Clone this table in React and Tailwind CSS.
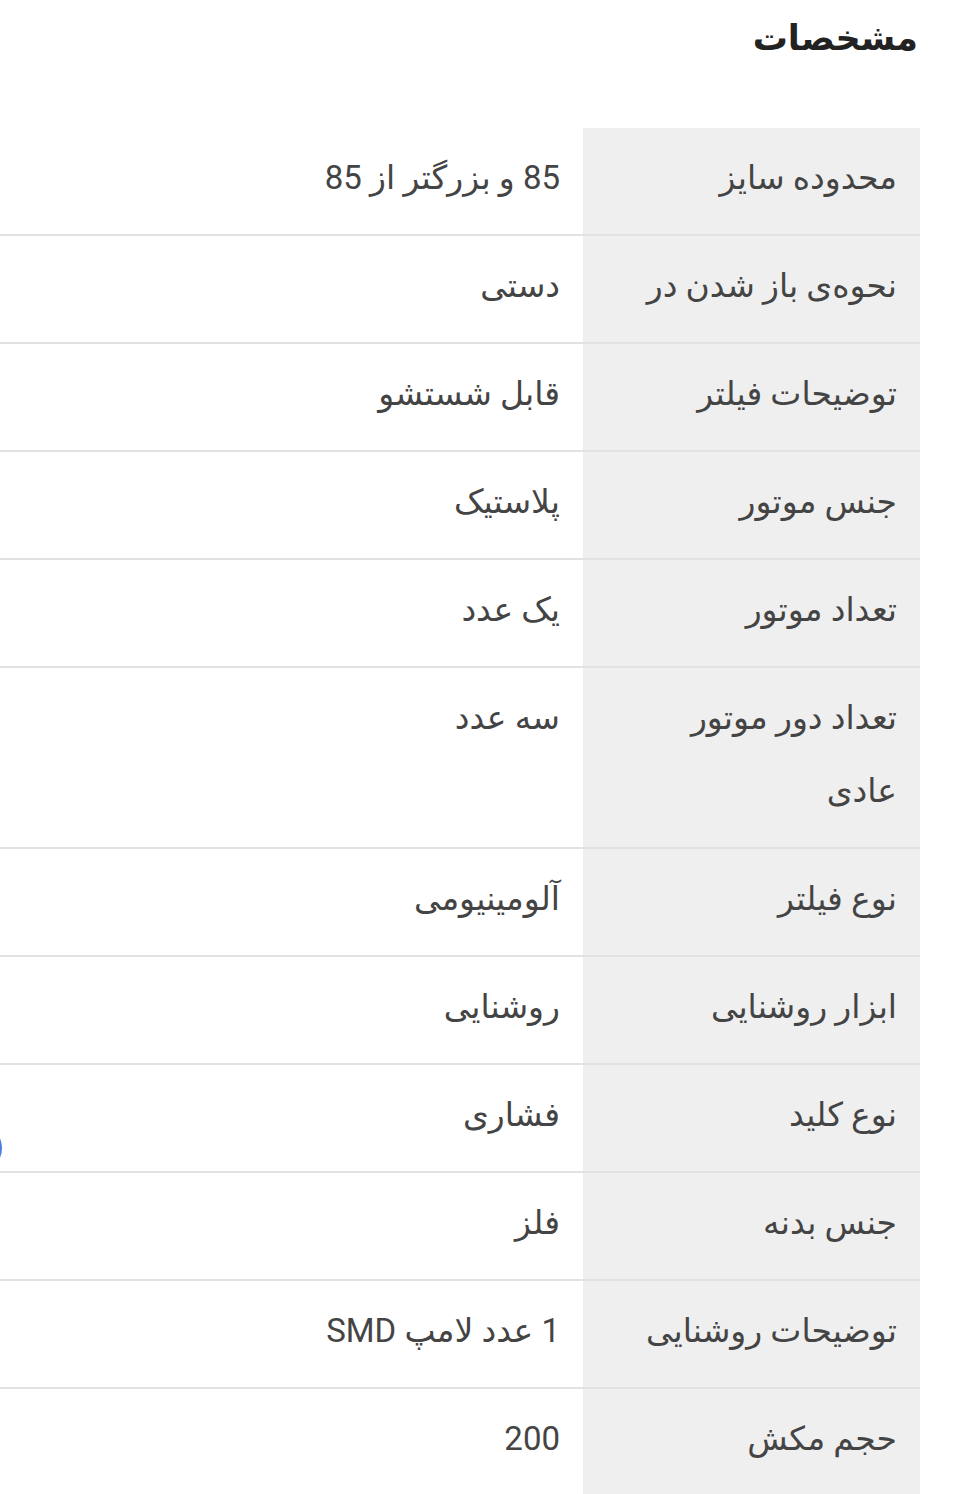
const specs = [
  { label: "محدوده سایز", value: "85 و بزرگتر از 85" },
  { label: "نحوه‌ی باز شدن در", value: "دستی" },
  { label: "توضیحات فیلتر", value: "قابل شستشو" },
  { label: "جنس موتور", value: "پلاستیک" },
  { label: "تعداد موتور", value: "یک عدد" },
  { label: "تعداد دور موتور عادی", value: "سه عدد" },
  { label: "نوع فیلتر", value: "آلومینیومی" },
  { label: "ابزار روشنایی", value: "روشنایی" },
  { label: "نوع کلید", value: "فشاری" },
  { label: "جنس بدنه", value: "فلز" },
  { label: "توضیحات روشنایی", value: "1 عدد لامپ SMD" },
  { label: "حجم مکش", value: "200" },
];

export default function App() {
  return (
    <div
      dir="rtl"
      className="relative w-[965px] h-[1494px] overflow-hidden bg-white font-['Roboto','DejaVu_Sans',sans-serif]"
    >
      {/* Title */}
      <h2 className="pr-[47px] pt-[13px] h-[128px] text-[35px] font-bold leading-[52px] text-[#222]">
        مشخصات
      </h2>

      {/* Spec table */}
      <div className="mr-[45px]">
        {specs.map((s, i) => (
          <div
            key={i}
            className={`flex ${i > 0 ? "border-t-2 border-[#e2e2e2]" : ""}`}
          >
            <div className="w-[337px] shrink-0 bg-[#efefef] pr-[23px] pl-[44px] pt-[13px] pb-[20px] text-[33px] leading-[73px] text-[#444]">
              {s.label}
            </div>
            <div className="flex-1 pr-[23px] pt-[13px] pb-[20px] text-[33px] leading-[73px] text-[#444]">
              {s.value}
            </div>
          </div>
        ))}
      </div>

      {/* floating button edge */}
      <div className="absolute left-[-46px] top-[1124px] w-[48px] h-[48px] rounded-full bg-[#4a7fe0]" />
    </div>
  );
}
